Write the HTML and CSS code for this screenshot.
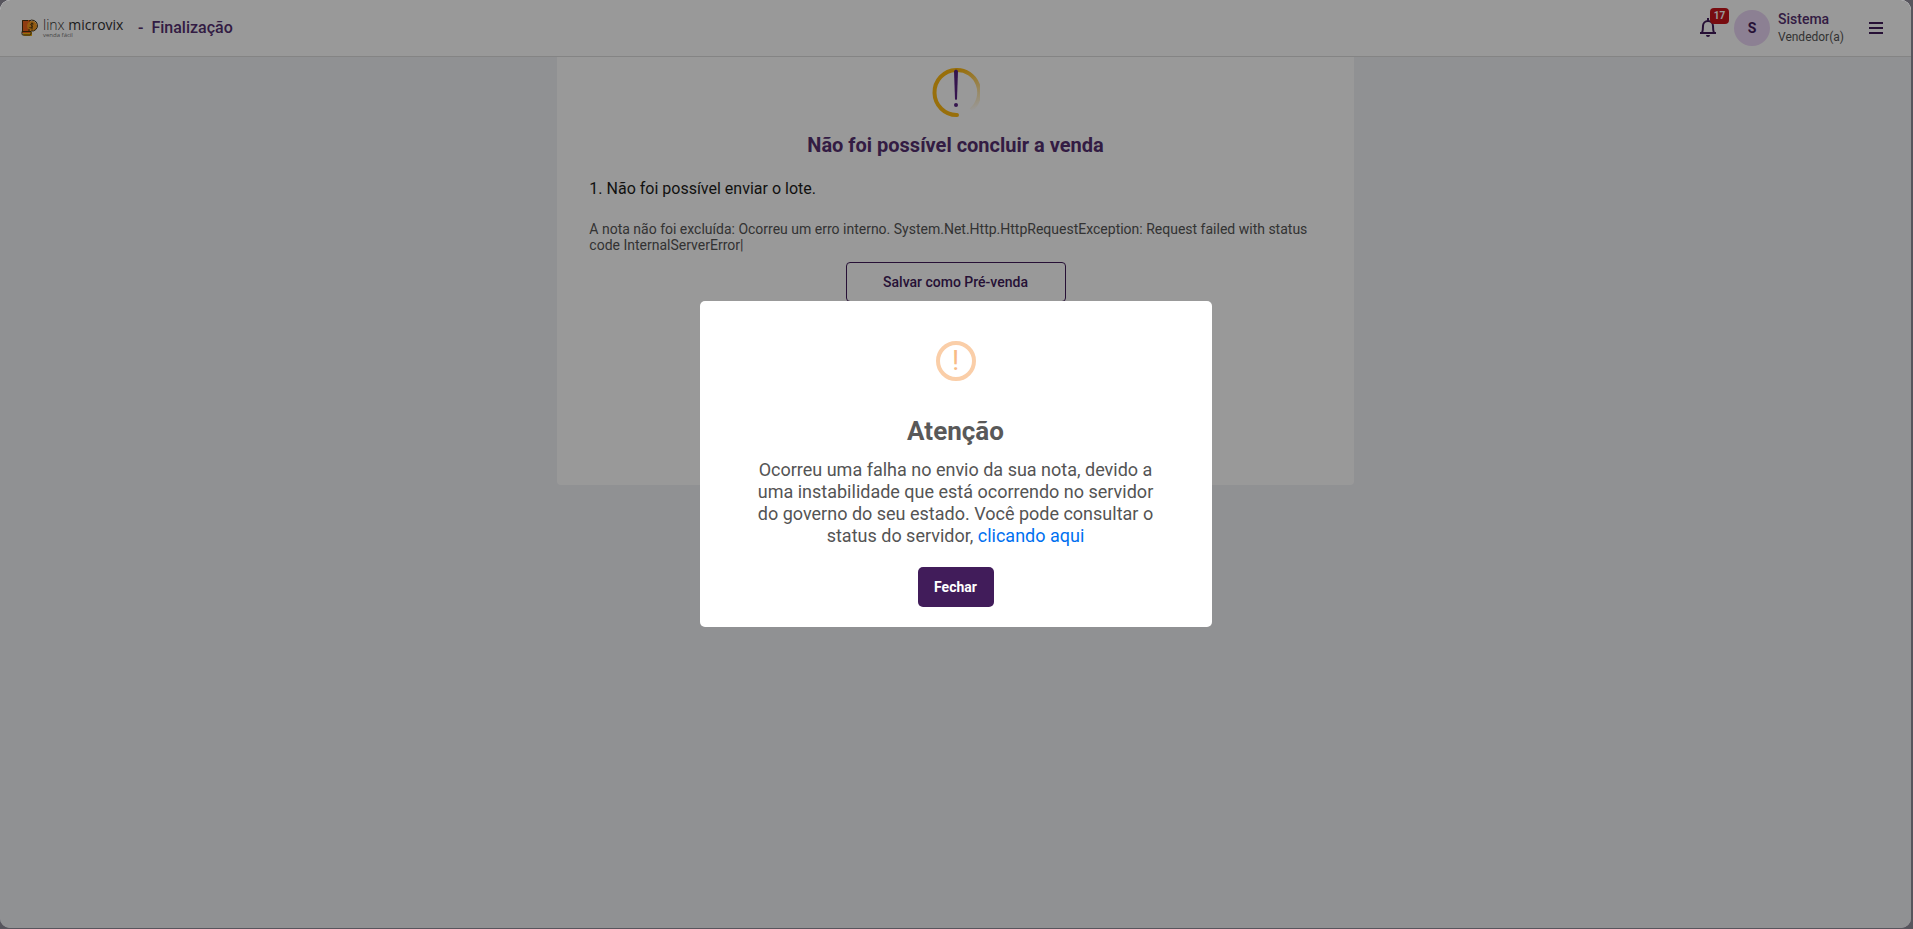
FILE: index.html
```
<!DOCTYPE html>
<html lang="pt-br">
<head>
    <meta charset="utf-8">
    <title>Finalização</title>
    <meta name="viewport" content="width=device-width, initial-scale=1">
    <link rel="stylesheet" href="styles.css">
</head>
<body>
    <div class="app">
        <header class="topbar">
            <div class="brand">
                <svg class="brand-icon" width="18" height="18" viewBox="0 0 18 18">
                    <path d="M3 3h8v10h1v4H5a2 2 0 0 1-2-2z" fill="#fdb913"/>
                    <rect x="2" y="1" width="8" height="13" fill="#f0641e"/>
                    <circle cx="12" cy="7" r="5" fill="#f79a1e"/>
                    <path d="M8 1.500H2.500V12M2 12.500h9V15q0 1-1 1H3q-1 0-1-1zM9 10v2M9 2a5.500 5.500 0 1 1 2 10" fill="none" stroke="#4a3410" stroke-width="1"/>
                    <path d="M13.500 5c-2-1-4 0-2 1.500s0 3-2 2M12 3.500v7" fill="none" stroke="#4a3410" stroke-width="1"/>
                </svg>
                <div class="brand-text">
                    <span class="brand-name">linx <b>microvix</b></span>
                    <span class="brand-product">venda fácil</span>
                </div>
            </div>
            <h1 class="page-title"><span>-</span> Finalização</h1>
            <div class="user-area">
                <button class="icon-button bell" type="button" aria-label="Notificações">
                    <svg width="18" height="20" viewBox="0 0 18 20" fill="none" stroke="#411c5a" stroke-width="2">
                        <path d="M1 15h16M3 15c1-2 1-3 1-7a5 5 0 0 1 10 0c0 4 0 5 1 7M9 3V0"/>
                        <path d="M7 17h4a2 2 0 0 1-4 0z" fill="#411c5a" stroke="none"/>
                    </svg>
                    <span class="badge">17</span>
                </button>
                <span class="avatar">S</span>
                <div class="user-info">
                    <strong>Sistema</strong>
                    <span>Vendedor(a)</span>
                </div>
                <button class="icon-button menu" type="button" aria-label="Menu">
                    <svg width="14" height="12" viewBox="0 0 14 12" fill="#411c5a">
                        <path d="M0 0h14v2H0zM0 5h14v2H0zM0 10h14v2H0z"/>
                    </svg>
                </button>
            </div>
        </header>
        <main class="card">
            <svg class="card-icon" width="48" height="52" viewBox="0 0 48 52">
                <defs>
                    <linearGradient id="ring" gradientUnits="userSpaceOnUse" x1="26" y1="3" x2="40" y2="44">
                        <stop offset="0" stop-color="#fdb913"/>
                        <stop offset="0.5" stop-color="#fdb913" stop-opacity="0.5"/>
                        <stop offset="1" stop-color="#fdb913" stop-opacity="0"/>
                    </linearGradient>
                </defs>
                <path d="M24 3a22 22.500 0 0 1 15 40" fill="none" stroke="url(#ring)" stroke-width="4"/>
                <path d="M25 48A22 22.500 0 0 1 24 3" fill="none" stroke="#fdb913" stroke-width="4" stroke-linecap="round"/>
                <path d="M22 4q2-3 4 0l-1 28q-1 2-2 0z" fill="#5b2483"/>
                <circle cx="24" cy="38" r="2" fill="#5b2483"/>
            </svg>
            <h2 class="card-title">Não foi possível concluir a venda</h2>
            <p class="error-title">1. Não foi possível enviar o lote.</p>
            <p class="error-detail">A nota não foi excluída: Ocorreu um erro interno. System.Net.Http.HttpRequestException: Request failed with status code InternalServerError|</p>
            <button class="btn-outline" type="button">Salvar como Pré-venda</button>
        </main>
        <div class="overlay">
            <div class="modal" role="dialog" aria-modal="true" aria-labelledby="modal-title">
                <div class="modal-icon">!</div>
                <h2 class="modal-title" id="modal-title">Atenção</h2>
                <p class="modal-text">Ocorreu uma falha no envio da sua nota, devido a uma instabilidade que está ocorrendo no servidor do governo do seu estado. Você pode consultar o status do servidor, <a href="#">clicando aqui</a></p>
                <button class="btn-primary" type="button">Fechar</button>
            </div>
        </div>
    </div>
</body>
</html>
```
FILE: styles.css
```
* {
    box-sizing: border-box;
}

body {
    margin: 0;
    background: #57555d;
    font-family: Roboto, Arial, sans-serif;
    color: #1d1d1b;
}

h1, h2, p {
    margin: 0;
}

button {
    font-family: inherit;
    cursor: pointer;
}

.app {
    position: relative;
    height: calc(100vh - 1px);
    margin-right: 2px;
    background: #f0f2f5;
    border-radius: 10px;
    overflow: hidden;
}

/* Top bar */
.topbar {
    display: flex;
    align-items: center;
    height: 57px;
    padding: 0 28px 0 20px;
    background: #fff;
    border-bottom: 1px solid #dcdcdc;
}

.brand {
    display: flex;
    align-items: center;
    gap: 5px;
    width: 118px;
}

.brand-icon {
    flex: none;
}

.brand-text {
    display: flex;
    flex-direction: column;
    font-family: "Open Sans", sans-serif;
    color: #333;
}

.brand-name {
    font-size: 14px;
    line-height: 14px;
    font-weight: 300;
    white-space: nowrap;
}

.brand-name b {
    font-weight: 500;
}

.brand-product {
    font-size: 6px;
    line-height: 6px;
    color: #777;
}

.page-title {
    font-size: 16px;
    line-height: 20px;
    font-weight: 500;
    color: #553070;
}

.page-title span {
    margin-right: 4px;
}

.user-area {
    display: flex;
    align-items: center;
    margin-left: auto;
}

.icon-button {
    display: flex;
    padding: 0;
    border: 0;
    background: none;
}

.bell {
    position: relative;
    margin-right: 17px;
}

.badge {
    position: absolute;
    top: -10px;
    left: 11px;
    width: 19px;
    border-radius: 4px;
    background: #c8151c;
    color: #fff;
    font-size: 10px;
    line-height: 16px;
    font-weight: 700;
    text-align: center;
}

.avatar {
    width: 36px;
    border-radius: 50%;
    background: #ead5f5;
    color: #411c5a;
    font-size: 14px;
    line-height: 36px;
    font-weight: 700;
    text-align: center;
}

.user-info {
    display: flex;
    flex-direction: column;
    margin: 0 25px 0 8px;
    font-size: 12px;
    line-height: 18px;
    color: #555;
}

.user-info strong {
    font-size: 14px;
    font-weight: 500;
    color: #553070;
}

/* Sale result */
.card {
    display: flex;
    flex-direction: column;
    align-items: center;
    width: 41.67%;
    min-height: 428px;
    margin: 0 auto;
    padding: 10px 32px 24px;
    background: #fff;
    border-radius: 0 0 4px 4px;
}

.card-title {
    margin-top: 14px;
    font-size: 20px;
    line-height: 24px;
    font-weight: 700;
    color: #553070;
}

.error-title {
    align-self: stretch;
    margin-top: 20px;
    font-size: 16px;
    line-height: 24px;
}

.error-detail {
    align-self: stretch;
    margin-top: 20px;
    font-size: 14px;
    line-height: 16px;
    color: #555;
}

.btn-outline {
    width: 220px;
    height: 40px;
    margin-top: 9px;
    border: 1px solid #411c5a;
    border-radius: 4px;
    background: #fff;
    color: #411c5a;
    font-size: 14px;
    font-weight: 500;
}

/* Modal */
.overlay {
    position: absolute;
    inset: 0;
    display: flex;
    align-items: center;
    justify-content: center;
    background: rgba(0, 0, 0, 0.4);
}

.modal {
    display: flex;
    flex-direction: column;
    align-items: center;
    width: 512px;
    padding: 40px 52px 20px;
    background: #fff;
    border-radius: 5px;
}

.modal-icon {
    width: 40px;
    height: 40px;
    border: 4px solid #facea8;
    border-radius: 50%;
    color: #f8bb86;
    font-size: 28px;
    line-height: 32px;
    text-align: center;
}

.modal-title {
    margin: 32px 0 10px;
    font-size: 26px;
    line-height: 36px;
    font-weight: 700;
    color: #595959;
}

.modal-text {
    font-size: 18px;
    line-height: 22px;
    color: #545454;
    text-align: center;
}

.modal-text a {
    color: #0070f0;
    text-decoration: none;
}

.btn-primary {
    min-width: 76px;
    height: 40px;
    margin-top: 20px;
    padding: 0 16px;
    border: 0;
    border-radius: 5px;
    background: #411c5a;
    color: #fff;
    font-size: 14px;
    font-weight: 700;
}
```
